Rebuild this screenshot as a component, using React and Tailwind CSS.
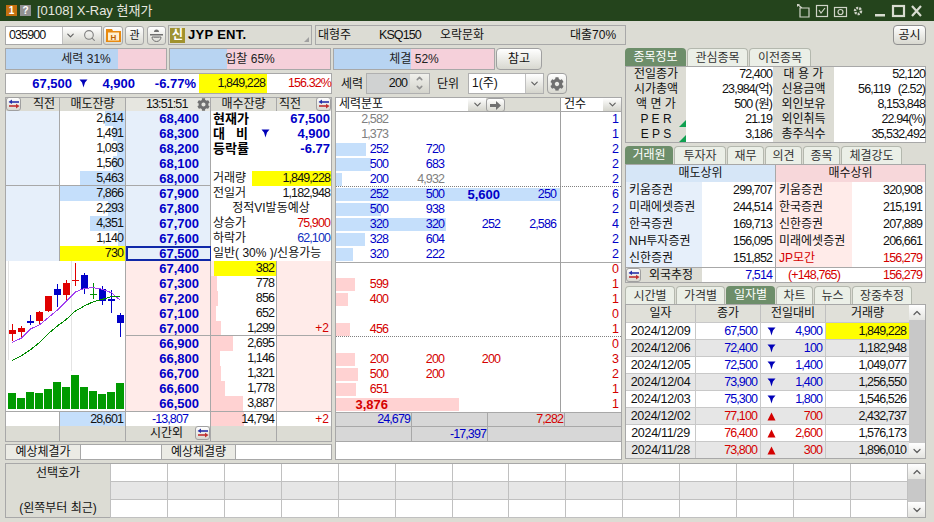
import React from "react";
import { ChevronDown, ChevronUp, Search } from "lucide-react";
import { FaCog } from "react-icons/fa";

const BLUE = "text-[#0000c8]";
const RED = "text-[#d40000]";
const NUM = "text-[12.5px] tracking-[-0.9px]";

function Tri({ up, className = "" }) {
  return (
    <svg width="9" height="9" viewBox="0 0 9 9" className={className}>
      {up ? (
        <polygon points="4.5,0.5 8.5,8.5 0.5,8.5" fill="#d40000" />
      ) : (
        <polygon points="0.5,0.5 8.5,0.5 6,3.5 4.5,8.5 3,3.5" fill="#0000b8" />
      )}
    </svg>
  );
}

function Toggle() {
  return (
    <span className="flex h-[14px] w-[15px] items-center justify-center rounded-[3px] border border-[#a0a0a0] bg-gradient-to-b from-white to-[#d8d8d0]">
      <svg width="12" height="10" viewBox="0 0 12 10">
        <path d="M11 3H3" stroke="#2830a8" strokeWidth="1.6" />
        <polygon points="4,0.5 4,5 0.5,3" fill="#2830a8" />
        <path d="M1 7h8" stroke="#c03030" strokeWidth="1.6" />
        <polygon points="8,4.8 8,9.5 11.5,7" fill="#c03030" />
      </svg>
    </span>
  );
}

function Gear({ size = 12 }) {
  return <FaCog size={size} className="text-[#707070]" />;
}

function Chev({ className = "" }) {
  return (
    <span className={`flex items-center justify-center bg-gradient-to-b from-white to-[#d4d4cc] ${className}`}>
      <ChevronDown size={11} strokeWidth={2.5} className="text-[#606060]" />
    </span>
  );
}

function Gauge({ label, pct, blue }) {
  return (
    <div className="relative flex h-[22px] w-[162px] items-center justify-center border border-[#a8a8a8] bg-[#f5d0da]">
      <div className="absolute inset-y-0 left-0 bg-[#b8d4f2]" style={{ width: blue }} />
      <span className="relative text-[12px] text-[#222]">
        {label} {pct}
      </span>
    </div>
  );
}

function Tab({ label, active, w }) {
  return (
    <div
      style={{ width: w }}
      className={
        active
          ? "flex h-[18px] items-center justify-center rounded-t-[4px] bg-[#6d8e6a] text-[12px] text-white"
          : "flex h-[18px] items-center justify-center rounded-t-[4px] border border-b-0 border-[#b4b8ae] bg-[#ebefe7] text-[12px] text-[#333]"
      }
    >
      {label}
    </div>
  );
}

const asks = [
  ["2,614", 20, "68,400"],
  ["1,491", 12, "68,300"],
  ["1,093", 8, "68,200"],
  ["1,560", 12, "68,100"],
  ["5,463", 45, "68,000"],
  ["7,866", 65, "67,900"],
  ["2,293", 17, "67,800"],
  ["4,351", 35, "67,700"],
  ["1,140", 7, "67,600"],
  ["730", 65, "67,500"],
];

const info = [
  <div className="flex w-full justify-between pl-[2px] pr-[1px] text-[13px] font-bold"><span className="text-black">현재가</span><span className={BLUE}>67,500</span></div>,
  <div className="flex w-full items-center pl-[2px] pr-[1px] text-[13px] font-bold"><span className="flex w-[48px] gap-[11px] text-black"><span>대</span><span>비</span></span><Tri /><span className={`ml-auto ${BLUE}`}>4,900</span></div>,
  <div className="flex w-full justify-between pl-[2px] pr-[1px] text-[13px] font-bold"><span className="text-black">등락률</span><span className={BLUE}>-6.77</span></div>,
  null,
  <div className="flex w-full pl-[2px]"><span className="w-[39px]">거래량</span><span className={`flex-1 bg-[#ffff00] pr-[1px] text-right ${NUM}`}>1,849,228</span></div>,
  <div className="flex w-full justify-between pl-[2px] pr-[1px]"><span>전일거</span><span className={NUM}>1,182,948</span></div>,
  <div className="w-full text-center">정적VI발동예상</div>,
  <div className="flex w-full justify-between pl-[2px] pr-[1px]"><span>상승가</span><span className={`${NUM} ${RED}`}>75,900</span></div>,
  <div className="flex w-full justify-between pl-[2px] pr-[1px]"><span>하락가</span><span className={`${NUM} text-[#1030c0]`}>62,100</span></div>,
  <div className="w-full whitespace-nowrap pl-[2px]">일반( 30% )/신용가능</div>,
];

const bids = [
  ["67,400", "382", 0, ""],
  ["67,300", "778", 6, ""],
  ["67,200", "856", 7, ""],
  ["67,100", "652", 5, ""],
  ["67,000", "1,299", 10, "+2"],
  ["66,900", "2,695", 22, ""],
  ["66,800", "1,146", 9, ""],
  ["66,700", "1,321", 10, ""],
  ["66,600", "1,778", 14, ""],
  ["66,500", "3,887", 32, ""],
];

const candles = [
  [34, 189, 241, 207, 219, "r"],
  [61, 195, 227, 201, 213, "r"],
  [88, 162, 192, 180, 186, "b"],
  [115, 150, 190, 153, 179, "r"],
  [142, 105, 153, 105, 150, "r"],
  [169, 69, 138, 84, 102, "b"],
  [196, 57, 120, 66, 102, "r"],
  [223, 6, 75, 57, 60, "r"],
  [250, 36, 99, 42, 84, "b"],
  [277, 66, 114, 99, 102, "g"],
  [304, 75, 132, 84, 120, "b"],
  [331, 87, 156, 114, 120, "b"],
  [358, 156, 228, 162, 186, "b"],
];
const colorOf = { r: "#e00000", b: "#0000c8", g: "#009000" };
const vols = [432, 447, 429, 432, 420, 399, 414, 378, 414, 426, 435, 429, 402];
const pts = (a) => a.map(([x, y]) => `${x / 3 - 5},${y / 3}`).join(" ");

function Chart() {
  return (
    <svg width="120" height="149" viewBox="0 0 120 149" className="block" shapeRendering="crispEdges">
      <line x1="2.5" y1="0" x2="2.5" y2="99" stroke="#e4e4e4" />
      <line x1="65.5" y1="0" x2="65.5" y2="110" stroke="#e4e4e4" />
      {candles.map(([x, wt, wb, bt, bb, c], i) => (
        <g key={i}>
          <line x1={x / 3 - 5} y1={wt / 3} x2={x / 3 - 5} y2={wb / 3} stroke={colorOf[c]} />
          <rect x={x / 3 - 8.5} y={bt / 3} width="7" height={(bb - bt) / 3} fill={colorOf[c]} />
        </g>
      ))}
      <polyline
        fill="none"
        stroke="#a040f0"
        points={pts([[34,244],[60,232],[90,203],[115,192],[142,170],[169,147],[196,120],[223,93],[250,82],[277,80],[304,85],[331,95],[356,116]])}
      />
      <polyline
        fill="none"
        stroke="#008a00"
        points={pts([[34,298],[60,285],[90,265],[115,245],[142,218],[169,195],[196,175],[223,150],[250,135],[277,122],[304,115],[331,107],[356,106]])}
      />
      {vols.map((t, i) => (
        <rect key={i} x={2 + i * 9} y={(t - 36) / 3} width="8" height={(480 - t) / 3} fill="#009a00" />
      ))}
    </svg>
  );
}

function OrderBook() {
  return (
    <div className="mt-[3px] w-[327px] border border-[#a8a8a8] bg-white">
      <div className="grid h-[13px] grid-cols-[54px_66px_85px_66px_54px] bg-[#dcdcd4] leading-[13px]">
        <div className="relative border-r border-[#a8a8a8] pl-[27px]"><span className="absolute left-0 top-[-1px]"><Toggle /></span>직전</div>
        <div className="border-r border-[#a8a8a8] text-center">매도잔량</div>
        <div className={`relative border-r border-[#a8a8a8] bg-[#e6e6e0] pl-[20px] ${NUM}`}>13:51:51<span className="absolute right-0 top-0"><Gear size={13} /></span></div>
        <div className="border-r border-[#a8a8a8] text-center">매수잔량</div>
        <div className="relative pl-[2px]">직전<span className="absolute right-0 top-[-1px]"><Toggle /></span></div>
      </div>
      <div className="grid grid-cols-[54px_66px_85px_66px_54px] auto-rows-[15px] leading-[15px]">
        {asks.map(([q, w, p], i) => {
          const line = i === 4 ? "border-b border-[#a8a8a8]" : "";
          return (
            <React.Fragment key={p}>
              <div className={`border-r border-[#a8a8a8] bg-[#e6effa] ${line}`} />
              <div className={`relative border-r border-[#a8a8a8] bg-white text-right ${line} ${NUM}`}>
                <div className={`absolute inset-y-0 right-0 ${i === 9 ? "bg-[#ffff00]" : "bg-[#c5dffb]"}`} style={{ width: w }} />
                <span className="relative pr-[2px]">{q}</span>
              </div>
              <div className={`border-r border-[#a8a8a8] bg-[#e6effa] pr-[11px] text-right text-[13px] font-bold ${BLUE} ${line} ${i === 9 ? "border-2 !border-[#1028a8] leading-[11px]" : ""}`}>{p}</div>
              <div className="col-span-2 flex items-center bg-white">{info[i]}</div>
            </React.Fragment>
          );
        })}
        <div className="col-span-2 row-span-10 h-[150px] border-r border-[#a8a8a8] bg-white">
          <Chart />
        </div>
        {bids.map(([p, q, w, d], i) => {
          const line = i === 4 ? "border-b border-[#a8a8a8]" : "";
          return (
            <React.Fragment key={p}>
              <div className={`border-r border-[#a8a8a8] bg-[#ffebe9] pr-[11px] text-right text-[13px] font-bold ${BLUE} ${line}`}>{p}</div>
              <div className={`relative border-r border-[#a8a8a8] text-right ${NUM} ${line} ${i === 0 ? "bg-[#ffebe9]" : "bg-white"}`}>
                {i === 0 ? <div className="absolute inset-y-0 left-[3px] right-0 bg-[#ffff00]" /> : <div className="absolute inset-y-0 left-0 bg-[#ffd2d2]" style={{ width: w }} />}
                <span className="relative pr-[2px]">{q}</span>
              </div>
              <div className={`bg-[#ffebe9] pr-[2px] text-right ${RED} ${line}`}>{d}</div>
            </React.Fragment>
          );
        })}
        <div className="border-r border-t border-[#a8a8a8] bg-white" />
        <div className={`border-r border-t border-[#a8a8a8] bg-[#c5dffb] pr-[2px] text-right ${NUM}`}>28,601</div>
        <div className={`border-r border-t border-[#a8a8a8] bg-white pr-[22px] text-right ${NUM} ${BLUE}`}>-13,807</div>
        <div className={`relative border-r border-t border-[#a8a8a8] bg-white pr-[2px] text-right ${NUM}`}><div className="absolute inset-y-0 left-0 w-[33px] bg-[#ffd2d2]" /><span className="relative">14,794</span></div>
        <div className={`border-t border-[#a8a8a8] bg-white pr-[2px] text-right ${RED}`}>+2</div>
        <div className="border-r border-[#a8a8a8] bg-[#dcdcd4]" />
        <div className="border-r border-[#a8a8a8] bg-[#dcdcd4]" />
        <div className="relative border-r border-[#a8a8a8] bg-[#dcdcd4] pl-[24px]">시간외<span className="absolute right-0 top-0"><Toggle /></span></div>
        <div className="border-r border-[#a8a8a8] bg-[#dcdcd4]" />
        <div className="bg-[#dcdcd4]" />
      </div>
    </div>
  );
}

const midAsk = [
  [["2,582", "g"], null, null, null, 1, 0],
  [["1,373", "g"], null, null, null, 1, 0],
  [["252"], ["720"], null, null, 2, 30],
  [["500"], ["683"], null, null, 2, 35],
  [["200"], ["4,932", "g"], null, null, 2, 6],
  [["252"], ["500"], ["5,600", "bold"], ["250"], 6, 224],
  [["500"], ["938"], null, null, 2, 45],
  [["320"], ["320"], ["252"], ["2,586"], 4, 110],
  [["328"], ["604"], null, null, 2, 29],
  [["320"], ["222"], null, null, 2, 17],
];
const midBid = [
  [null, null, null, null, 0, 0],
  [["599"], null, null, null, 1, 19],
  [["400"], null, null, null, 1, 12],
  [null, null, null, null, 0, 0],
  [["456"], null, null, null, 1, 14],
  [null, null, null, null, 0, 0],
  [["200"], ["200"], ["200"], null, 3, 19],
  [["500"], ["200"], null, null, 2, 22],
  [["651"], null, null, null, 1, 20],
  [["3,876", "bold"], null, null, null, 1, 123],
];

function MidRow({ row, side, line }) {
  const bar = side === "a" ? "bg-[#c5dffb]" : "bg-[#ffd2d2]";
  const col = side === "a" ? BLUE : RED;
  return (
    <div className={`relative flex h-[15px] leading-[15px] ${line ? "border-b border-dotted border-[#808080]" : ""}`}>
      <div className={`absolute left-0 top-[1px] h-[13px] ${bar}`} style={{ width: row[5] }} />
      {row.slice(0, 4).map((c, i) => (
        <div
          key={i}
          className={`relative w-[56px] pr-[4px] text-right ${c && c[1] === "g" ? "text-[#808080]" : col} ${c && c[1] === "bold" ? "text-[13px] font-bold" : NUM}`}
        >
          {c ? c[0] : ""}
        </div>
      ))}
      <div className={`relative w-[61px] border-l border-[#a0a0a0] pr-[3px] text-right ${NUM} ${col}`}>{row[4]}</div>
    </div>
  );
}

function MiddlePanel() {
  return (
    <div className="ml-[2px] mt-[3px] flex h-[363px] w-[287px] flex-col border border-[#a8a8a8] bg-white">
      <div className="flex h-[14px] border-b border-[#a8a8a8] bg-[#dcdcd4] leading-[13px]">
        <div className="flex w-[150px] justify-between bg-white pl-[3px]"><span>세력분포</span><Chev className="w-[18px]" /></div>
        <span className="flex h-[14px] w-[19px] items-center justify-center rounded-[3px] border border-[#a0a0a0] bg-gradient-to-b from-white to-[#d8d8d0]">
          <svg width="12" height="9" viewBox="0 0 12 9"><path d="M0 3h6V0l5 4.500-5 4.500V6H0z" fill="#707070" /></svg>
        </span>
        <div className="w-[55px]" />
        <div className="flex w-[61px] justify-between border-l border-[#a0a0a0] bg-white pl-[3px]"><span>건수</span><Chev className="w-[18px]" /></div>
      </div>
      {midAsk.map((r, i) => <MidRow key={i} row={r} side="a" line={i === 4} />)}
      <div className="border-t border-[#a8a8a8]" />
      <div className="mt-[-1px]">
        {midBid.map((r, i) => <MidRow key={i} row={r} side="b" line={i === 4} />)}
      </div>
      <div className={`grid h-[15px] grid-cols-[76px_76px_77px_56px] border-y border-[#a8a8a8] bg-[#d7d7d7] leading-[13px] ${NUM}`}>
        <div className={`border-r border-[#a8a8a8] pr-[1px] text-right ${BLUE}`}>24,679</div>
        <div className="border-r border-[#a8a8a8]" />
        <div className={`border-r border-[#a8a8a8] pr-[1px] text-right ${RED}`}>7,282</div>
        <div />
      </div>
      <div className={`grid h-[15px] grid-cols-[76px_76px_133px] border-b border-[#a8a8a8] bg-[#d7d7d7] leading-[14px] ${NUM}`}>
        <div className="border-r border-[#a8a8a8]" />
        <div className={`border-r border-[#a8a8a8] pr-[1px] text-right ${BLUE}`}>-17,397</div>
        <div />
      </div>
      <div className="flex-1" />
    </div>
  );
}

const stockInfo = [
  ["전일종가", "72,400", "대 용 가", "52,120"],
  ["시가총액", "23,984(억)", "신용금액", "56,119   (2.52)"],
  ["액 면 가", "500 (원)", "외인보유", "8,153,848"],
  ["P E R", "21.19", "외인취득", "22.94(%)"],
  ["E P S", "3,186", "총주식수", "35,532,492"],
];
const traders = [
  ["키움증권", "299,707", "키움증권", "320,908"],
  ["미래에셋증권", "244,514", "한국증권", "215,191"],
  ["한국증권", "169,713", "신한증권", "207,889"],
  ["NH투자증권", "156,095", "미래에셋증권", "206,661"],
  ["신한증권", "151,852", "JP모간", "156,279"],
];
const daily = [
  ["2024/12/09", "67,500", "4,900", "1,849,228", 0],
  ["2024/12/06", "72,400", "100", "1,182,948", 0],
  ["2024/12/05", "72,500", "1,400", "1,049,077", 0],
  ["2024/12/04", "73,900", "1,400", "1,256,550", 0],
  ["2024/12/03", "75,300", "1,800", "1,546,526", 0],
  ["2024/12/02", "77,100", "700", "2,432,737", 1],
  ["2024/11/29", "76,400", "2,600", "1,576,173", 1],
  ["2024/11/28", "73,800", "300", "1,896,010", 1],
];

function ScrollBar({ h }) {
  return (
    <div className="flex w-[17px] flex-col bg-white" style={{ height: h }}>
      <div className="flex h-[15px] items-center justify-center bg-gradient-to-b from-white to-[#e4e4e0]"><ChevronUp size={12} strokeWidth={2.5} className="text-[#606060]" /></div>
      <div className="flex-1 bg-[#c8c8c8]" />
      <div className="flex h-[15px] items-center justify-center bg-gradient-to-b from-white to-[#e4e4e0]"><ChevronDown size={12} strokeWidth={2.5} className="text-[#606060]" /></div>
    </div>
  );
}

function RightColumn() {
  return (
    <div className="ml-[3px] flex w-[301px] flex-col">
      <div className="flex gap-px">
        <Tab label="종목정보" active w={61} />
        <Tab label="관심종목" w={61} />
        <Tab label="이전종목" w={62} />
      </div>
      <div className="h-[77px] border border-[#a8a8a8] bg-white leading-[15px]">
        {stockInfo.map((r, i) => (
          <div key={i} className="grid h-[15px] grid-cols-[60px_87px_61px_91px]">
            <div className="relative bg-[#dcdcd4] text-center">
              {r[0]}
              {i >= 3 && <span className="absolute bottom-0 right-0 h-0 w-0 border-b-[7px] border-l-[7px] border-b-[#10a050] border-l-transparent" />}
            </div>
            <div className={`whitespace-pre pr-[1px] text-right ${NUM}`}>{r[1]}</div>
            <div className="bg-[#dcdcd4] text-center">{r[2]}</div>
            <div className={`whitespace-pre text-right ${NUM}`}>{r[3]}</div>
          </div>
        ))}
      </div>

      <div className="mt-[3px] flex gap-px">
        <Tab label="거래원" active w={48} />
        <Tab label="투자자" w={52} />
        <Tab label="재무" w={37} />
        <Tab label="의견" w={37} />
        <Tab label="종목" w={37} />
        <Tab label="체결강도" w={61} />
      </div>
      <div className="h-[119px] border border-[#a8a8a8] bg-white leading-[17px]">
        <div className="grid h-[17px] grid-cols-[150px_149px] border-b border-[#b0b0b0] text-center">
          <div className="border-r border-[#a8a8a8] bg-[#d6e6f7]">매도상위</div>
          <div className="bg-[#f7d7da]">매수상위</div>
        </div>
        {traders.map((r, i) => (
          <div key={i} className="grid h-[17px] grid-cols-[76px_74px_76px_73px]">
            <div className="whitespace-nowrap bg-[#e6effa] pl-[3px]">{r[0]}</div>
            <div className={`border-r border-[#a8a8a8] pr-[3px] text-right ${NUM}`}>{r[1]}</div>
            <div className={`whitespace-nowrap bg-[#ffebe9] pl-[3px] ${i === 4 ? RED : ""}`}>{r[2]}</div>
            <div className={`pr-[3px] text-right ${NUM} ${i === 4 ? RED : ""}`}>{r[3]}</div>
          </div>
        ))}
        <div className="grid h-[15px] grid-cols-[76px_74px_76px_73px] border-t border-[#a8a8a8] leading-[14px]">
          <div className="flex items-center gap-[8px] bg-[#dcdcd4]"><Toggle /><span>외국추정</span></div>
          <div className={`border-r border-[#a8a8a8] pr-[3px] text-right ${NUM} ${BLUE}`}>7,514</div>
          <div className={`text-center ${NUM} ${RED}`}>(+148,765)</div>
          <div className={`pr-[3px] text-right ${NUM} ${RED}`}>156,279</div>
        </div>
      </div>

      <div className="mt-[3px] flex gap-px">
        <Tab label="시간별" w={50} />
        <Tab label="가격별" w={49} />
        <Tab label="일자별" active w={49} />
        <Tab label="차트" w={37} />
        <Tab label="뉴스" w={37} />
        <Tab label="장중추정" w={60} />
      </div>
      <div className="flex h-[155px] border border-[#a8a8a8] bg-white">
        <div className="w-[283px]">
          <div className="grid h-[17px] grid-cols-[70px_65px_65px_83px] bg-[#e0e0d9] text-center leading-[17px]">
            <div className="border-r border-[#c0c0c0]">일자</div>
            <div className="border-r border-[#c0c0c0]">종가</div>
            <div className="border-r border-[#c0c0c0]">전일대비</div>
            <div>거래량</div>
          </div>
          {daily.map((r, i) => {
            const c = r[4] ? RED : BLUE;
            return (
              <div key={i} className={`grid h-[17px] grid-cols-[70px_65px_65px_83px] border-t border-[#c8c8c8] leading-[16px] ${i % 2 ? "bg-[#e6e6e6]" : "bg-white"}`}>
                <div className="border-r border-[#c8c8c8] text-center text-[12.5px] tracking-[-0.3px]">{r[0]}</div>
                <div className={`border-r border-[#c8c8c8] pr-[3px] text-right ${NUM} ${c}`}>{r[1]}</div>
                <div className={`flex items-center justify-between border-r border-[#c8c8c8] pl-[6px] pr-[3px] ${NUM} ${c}`}><Tri up={!!r[4]} /><span>{r[2]}</span></div>
                <div className={`pr-[3px] text-right ${NUM} ${i === 0 ? "bg-[#ffff00]" : ""}`}>{r[3]}</div>
              </div>
            );
          })}
        </div>
        <ScrollBar h={153} />
      </div>
    </div>
  );
}

function TitleBar() {
  const s = { fill: "none", stroke: "#d0d4c8", strokeWidth: 1.2 };
  return (
    <div className="flex h-[21px] items-center bg-[#24441c] pl-[6px] text-[13px] text-[#e8e8e0]">
      <span className="flex h-[11px] w-[11px] items-center justify-center bg-[#c47010] text-[10px] font-bold text-white">1</span>
      <span className="ml-[3px] flex h-[11px] w-[11px] items-center justify-center bg-[#909090] text-[10px] font-bold text-white">?</span>
      <span className="ml-[6px]">[0108] X-Ray 현재가</span>
      <svg width="68" height="14" viewBox="0 0 68 14" className="ml-auto">
        <path d="M3 4h9v9H3zM0 0l5 4M0 0h3M0 0v3" {...s} />
        <rect x="19.500" y="1.500" width="11" height="11" {...s} /><path d="M22 6l2 3 4-5" {...s} />
        <rect x="37.500" y="3.500" width="12" height="9" {...s} /><circle cx="43.500" cy="8" r="2.500" {...s} />
        <circle cx="61" cy="7" r="3" fill="none" stroke="#d0d4c8" strokeWidth="2.500" strokeDasharray="2 1" />
      </svg>
      <svg width="60" height="14" viewBox="0 0 60 14" className="ml-[1px] mr-[8px]">
        <rect x="9" y="10" width="10" height="2.500" fill="#d8dcd0" />
        <rect x="27" y="2" width="11" height="10" fill="none" stroke="#d8dcd0" strokeWidth="2.200" />
        <path d="M46 2l9 10M55 2l-9 10" stroke="#d8dcd0" strokeWidth="2.200" />
      </svg>
    </div>
  );
}

function Toolbar() {
  return (
    <div className="ml-[5px] mr-[8px] mt-[4px] flex h-[20px] items-center">
      <div className="flex h-[19px] w-[97px] border border-[#a8a8a8] bg-white leading-[17px]">
        <span className={`w-[56px] pl-[3px] ${NUM}`}>035900</span>
        <Chev className="w-[16px] border-l border-[#c0c0c0]" />
        <span className="flex w-[23px] items-center justify-center bg-gradient-to-b from-white to-[#d4d4cc]"><Search size={13} strokeWidth={2} className="text-[#808080]" /></span>
      </div>
      <span className="ml-[1px] flex h-[19px] w-[20px] items-center justify-center rounded-[3px] border border-[#a8a8a8] bg-gradient-to-b from-white to-[#d8d8d0]">
        <svg width="15" height="14" viewBox="0 0 15 14"><path d="M0 1h6l1 2h8v11H0z" fill="#e88a10" /><rect x="2" y="4.500" width="11" height="8" fill="#fff0d0" /><text x="4.500" y="11.500" fontSize="8" fontWeight="700" fill="#c06000" fontFamily="Liberation Sans">H</text></svg>
      </span>
      <span className="ml-[2px] flex h-[19px] w-[19px] items-center justify-center rounded-[3px] border border-[#a8a8a8] bg-gradient-to-b from-white to-[#d8d8d0] text-[11px]">관</span>
      <span className="ml-[3px] flex h-[19px] w-[19px] items-center justify-center rounded-[3px] border border-[#a8a8a8] bg-gradient-to-b from-white to-[#d8d8d0]">
        <svg width="13" height="14" viewBox="0 0 13 14"><path d="M4 4a2.500 2.500 0 015 0zM0 6h13v1.500H0z" fill="#707070" /><path d="M2 9a4.500 4.500 0 009 0z" fill="none" stroke="#707070" /><path d="M4 9.500h5" stroke="#909090" /></svg>
      </span>
      <div className="relative ml-[2px] flex h-[20px] w-[144px] items-center border border-[#a8a8a8] bg-[#dcdcd4] pl-[1px]">
        <span className="flex h-[15px] w-[15px] items-center justify-center bg-[#a0922e] text-[12px] font-bold text-white">신</span>
        <span className="ml-[3px] text-[13px] font-bold tracking-[0.3px] text-black">JYP ENT.</span>
        <span className="absolute bottom-[2px] right-[2px] h-0 w-0 border-b-[5px] border-l-[5px] border-b-[#a0a0a0] border-l-transparent" />
      </div>
      <div className="ml-[3px] flex h-[20px] w-[311px] items-center border border-[#a8a8a8] pl-[2px] leading-[18px]">
        <span className="w-[61px]">대형주</span>
        <span className={`w-[61px] ${NUM}`}>KSQ150</span>
        <span className="w-[130px]">오락문화</span>
        <span>대출70%</span>
      </div>
      <span className="ml-auto flex h-[20px] w-[33px] items-center justify-center rounded-[4px] border border-[#909090] bg-gradient-to-b from-white to-[#d8d8d0]">공시</span>
    </div>
  );
}

function PriceBox() {
  return (
    <div className="mt-[3px] flex h-[21px] w-[327px] items-center border border-[#a8a8a8] bg-white text-[13px] font-bold leading-[19px]">
      <span className={`w-[66px] text-right ${BLUE}`}>67,500</span>
      <span className="flex w-[16px] justify-end"><Tri /></span>
      <span className={`w-[47px] text-right ${BLUE}`}>4,900</span>
      <span className={`w-[61px] text-right ${BLUE}`}>-6.77%</span>
      <span className={`ml-[3px] h-full w-[68px] bg-[#ffff00] pr-[2px] text-right font-normal ${NUM}`}>1,849,228</span>
      <span className={`flex-1 text-right font-normal ${NUM} ${RED}`}>156.32%</span>
    </div>
  );
}

function Controls() {
  return (
    <div className="mt-[3px] flex h-[21px] items-center">
      <span className="ml-[8px] w-[25px]">세력</span>
      <div className="flex h-[21px] w-[64px] border border-[#b0b0b0] bg-[#d0d2d2]">
        <span className={`flex-1 pr-[3px] text-right leading-[19px] ${NUM}`}>200</span>
        <span className="flex w-[19px] flex-col bg-gradient-to-b from-[#f0f0ec] to-[#d4d4cc] text-[#909090]">
          <ChevronUp size={9} strokeWidth={4} className="mx-auto" />
          <ChevronDown size={9} strokeWidth={4} className="mx-auto" />
        </span>
      </div>
      <span className="ml-[7px] w-[30px]">단위</span>
      <div className="ml-[1px] flex h-[21px] w-[76px] border border-[#b0b0b0] bg-white leading-[19px]">
        <span className="flex-1 pl-[3px]">1(주)</span>
        <Chev className="w-[18px] border-l border-[#c0c0c0]" />
      </div>
      <span className="ml-[3px] flex h-[21px] w-[20px] items-center justify-center rounded-[4px] border border-[#a0a0a0] bg-gradient-to-b from-white to-[#d8d8d0]"><Gear size={14} /></span>
    </div>
  );
}

function BottomGrid() {
  const cols = Array.from({ length: 14 });
  return (
    <div className="ml-[5px] mt-[3px] flex h-[55px] w-[921px] border border-[#a8a8a8] bg-white">
      <div className="flex w-[104px] flex-col justify-between bg-[#dcdcd4] px-[6px] text-center leading-[18px]">
        <span>선택호가</span>
        <span className="whitespace-nowrap">(왼쪽부터 최근)</span>
      </div>
      <div className="w-[798px]">
        {[0, 1, 2].map((r) => (
          <div key={r} className={`flex h-[18px] border-l border-b border-[#c0c0c0] ${r === 1 ? "bg-[#e6e6e6]" : "bg-white"}`}>
            {cols.map((_, i) => <div key={i} className="h-full w-[57px] border-r border-[#c0c0c0]" />)}
          </div>
        ))}
      </div>
      <ScrollBar h={53} />
    </div>
  );
}

export default function App() {
  return (
    <div className="flex h-[522px] w-[934px] flex-col overflow-hidden bg-[#dcdcd4] font-['Liberation_Sans','Noto_Sans_CJK_KR',sans-serif] text-[12px] text-[#111]">
      <TitleBar />
      <Toolbar />
      <div className="ml-[5px] mt-[3px] flex h-[412px]">
        <div className="flex w-[328px] flex-col">
          <div className="flex gap-[2px]">
            <Gauge label="세력" pct="31%" blue={112} />
            <Gauge label="입찰" pct="65%" blue={57} />
          </div>
          <PriceBox />
          <OrderBook />
          <div className="mt-[2px] flex h-[16px] w-[327px] border border-[#a8a8a8] bg-white leading-[14px]">
            <div className="w-[75px] border-r border-[#a8a8a8] bg-[#ebebe5] text-center">예상체결가</div>
            <div className="w-[80px]" />
            <div className="w-[75px] border-x border-[#a8a8a8] bg-[#ebebe5] text-center">예상체결량</div>
            <div className="flex-1" />
          </div>
        </div>
        <div className="flex w-[289px] flex-col">
          <div className="flex items-start">
            <Gauge label="체결" pct="52%" blue={77} />
            <span className="ml-[1px] flex h-[22px] w-[46px] items-center justify-center rounded-[4px] border border-[#a0a0a0] bg-gradient-to-b from-white to-[#d8d8d0]">참고</span>
          </div>
          <Controls />
          <MiddlePanel />
        </div>
        <RightColumn />
      </div>
      <BottomGrid />
    </div>
  );
}
